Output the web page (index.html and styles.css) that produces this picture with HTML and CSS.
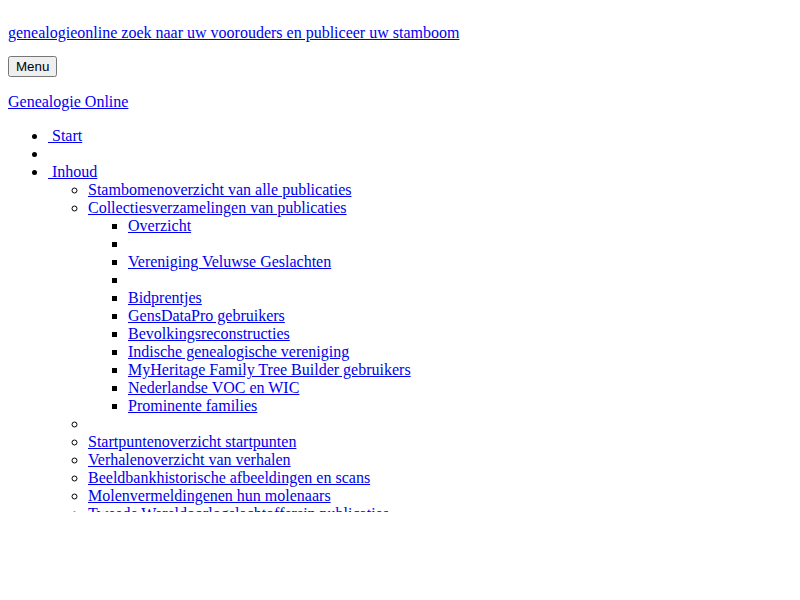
FILE: index.html
```html
<!DOCTYPE html>
<html lang="nl">
<head>
	<meta charset="UTF-8">
	<title>Genealogie Online</title>
	<link rel="stylesheet" href="styles.css">
</head>
<body>
	<div class="page">
		<p class="tagline"><a href="#">genealogieonline zoek naar uw voorouders en publiceer uw stamboom</a></p>
		<p class="menu"><button type="button">Menu</button></p>
		<p><a href="#">Genealogie Online</a></p>
		<ul>
			<li><a href="#"><i class="icon"></i> Start</a></li>
			<li></li>
			<li><a href="#"><i class="icon"></i> Inhoud</a>
				<ul>
					<li><a href="#">Stambomen<span>overzicht van alle publicaties</span></a></li>
					<li><a href="#">Collecties<span>verzamelingen van publicaties</span></a>
						<ul>
							<li><a href="#">Overzicht</a></li>
							<li></li>
							<li><a href="#">Vereniging Veluwse Geslachten</a></li>
							<li></li>
							<li><a href="#">Bidprentjes</a></li>
							<li><a href="#">GensDataPro gebruikers</a></li>
							<li><a href="#">Bevolkingsreconstructies</a></li>
							<li><a href="#">Indische genealogische vereniging</a></li>
							<li><a href="#">MyHeritage Family Tree Builder gebruikers</a></li>
							<li><a href="#">Nederlandse VOC en WIC</a></li>
							<li><a href="#">Prominente families</a></li>
						</ul>
					</li>
					<li></li>
					<li><a href="#">Startpunten<span>overzicht startpunten</span></a></li>
					<li><a href="#">Verhalen<span>overzicht van verhalen</span></a></li>
					<li><a href="#">Beeldbank<span>historische afbeeldingen en scans</span></a></li>
					<li><a href="#">Molenvermeldingen<span>en hun molenaars</span></a></li>
					<li><a href="#">Tweede Wereldoorlog<span>slachtoffersin publicaties</span></a></li>
					<li><a href="#">Nieuws<span>uit de genealogie</span></a></li>
				</ul>
			</li>
		</ul>
	</div>
</body>
</html>
```
FILE: styles.css
```css
body{
	font-family: "Liberation Serif", "Times New Roman", serif;
}
/* de pagina is afgekapt, net als in de schermafbeelding */
.page{
	height: 504px;
	overflow: hidden;
}
a{
	color: #0000ee;
}
.tagline{
	margin-bottom: 14px;
}
.menu{
	margin-top: 14px;
}
.icon{
	display: inline-block;
}
```
